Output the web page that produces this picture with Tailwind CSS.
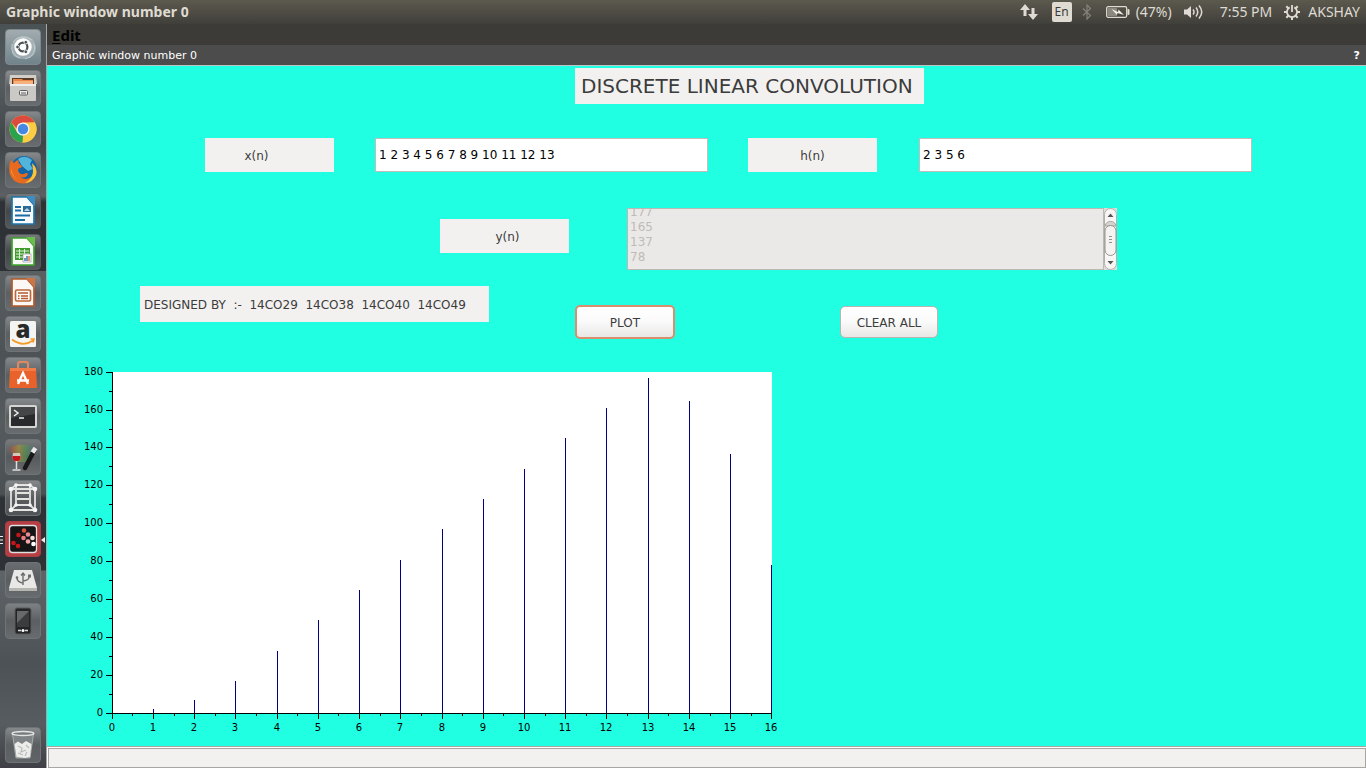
<!DOCTYPE html>
<html lang="en">
<head>
<meta charset="utf-8">
<title>Graphic window number 0</title>
<script src="https://cdn.jsdelivr.net/npm/@tailwindcss/browser@4"></script>
</head>
<body class="h-screen flex flex-col overflow-hidden bg-[#3c3b37] font-['DejaVu_Sans',sans-serif]">

<header class="h-6 shrink-0 flex items-center justify-between bg-linear-to-b from-[#5c594e] via-[#4e4c44] to-[#413f3a] px-1.5 font-['Noto_Sans',sans-serif] text-sm text-[#dfdbd2]">
  <h1 class="font-bold">Graphic window number 0</h1>
  <div class="flex items-center">
    <svg class="w-[18px] h-4 mr-3.5" viewBox="0 0 18 16" fill="#dfdbd2"><path d="M5 0 10 6H6.500V12H3.500V6H0ZM13 16 8 10H11.500V4H14.500V10H18Z"/></svg>
    <button class="w-5 h-5 mr-2.5 rounded-[2px] bg-[#dfdbd2] text-[#3c3b37] text-xs leading-5 text-center">En</button>
    <svg class="w-2.5 h-4 mr-3.5" viewBox="0 0 10 16" fill="none" stroke="#85827a" stroke-width="1.2"><path d="M1 4.500 8.500 11.500 5 15V1L8.500 4.500 1 11.500"/></svg>
    <svg class="w-6 h-3 mr-1.5" viewBox="0 0 24 12"><rect x=".7" y=".7" width="20" height="10.600" rx="1.500" fill="none" stroke="#dfdbd2" stroke-width="1.300"/><rect x="21.500" y="3" width="2" height="6" rx="1" fill="#dfdbd2"/><rect x="2" y="2" width="9" height="8" fill="#8b887f"/><path d="M5.500 3 12 6 12.500 3.500 18 9 11.500 7 11 9Z" fill="#f1eee6"/></svg>
    <span class="mr-3">(47%)</span>
    <svg class="w-5 h-4 mr-4" viewBox="0 0 20 16"><path d="M0 5.500H3L7 2V14L3 10.500H0Z" fill="#dfdbd2"/><path d="M9 5.500Q11 8 9 10.500M12 3.500Q15.500 8 12 12.500M15 1.500Q20.500 8 15 14.500" fill="none" stroke="#dfdbd2" stroke-width="1.500"/></svg>
    <span class="mr-3">7:55 PM</span>
    <svg class="w-4 h-4 mr-2" viewBox="0 0 16 16" fill="none" stroke="#dfdbd2"><path d="M5.700 3.400A5.100 5.100 0 1 0 10.300 3.400" stroke-width="1.800"/><path d="M8 1V8" stroke-width="1.800"/><path d="M0 8H3M13 8H16M2.300 2.300 4.500 4.500M13.700 2.300 11.500 4.500M2.300 13.700 4.500 11.500M13.700 13.700 11.500 11.500M8 13V16" stroke-width="2"/></svg>
    <span>AKSHAY</span>
  </div>
</header>

<div class="flex-1 min-h-0 flex">
  <nav class="w-[47px] shrink-0 flex flex-col gap-[5px] pt-[5px] pb-[5px] pl-[5px] border-r border-[#a5a5a5] bg-[linear-gradient(180deg,#4b5256_0px,#555b5e_60px,#3f4548_120px,#5b6163_172px,#2e3236_178px,#2e3236_247px,#5a6062_247px,#4c5255_330px,#555b5e_400px,#4b5153_470px,#2e3236_474px,#2e3236_546px,#5e6467_547px,#4c5255_640px,#565c5f_700px,#403f47_744px)]">
    <a href="#dash" aria-label="Dash" class="size-9 rounded-sm border border-[#7d898e] bg-linear-to-b from-[#a2acb0] to-[#71838b]"><svg viewBox="1 1 34 34"><path d="M7 24Q5 9 18 7Q29 6 31 18Q31 29 20 30Q9 30 7 24" fill="#b4c0c4" opacity=".6"/><path d="M8 13Q15 4 27 11M29 15Q32 27 20 30M15 29Q5 26 7 15" fill="none" stroke="#d6dddf" opacity=".6"/><circle cx="18" cy="18" r="8.700" fill="#fff"/><circle cx="18" cy="18" r="4.400" fill="none" stroke="#4a5256" stroke-width="2.200"/><g fill="#4a5256" stroke="#fff" stroke-width=".8"><circle cx="12.500" cy="18" r="1.800"/><circle cx="20.800" cy="13.200" r="1.800"/><circle cx="20.800" cy="22.800" r="1.800"/></g></svg></a>
    <a href="#files" aria-label="Files" class="size-9 rounded-sm border border-[#6e7375] bg-linear-to-b from-[#8b8f91] via-[#5b5f61] to-[#686c6e]"><svg viewBox="1 1 34 34"><path d="M5 5H31L32 14H4Z" fill="#d1cdc7"/><path d="M7 8H29V15H7Z" fill="#5c3a26"/><path d="M8 9H17L18 10H28V15H8Z" fill="#e98545"/><path d="M9 11H28V15H9Z" fill="#f6b27e"/><rect x="5" y="14" width="26" height="17" rx="1" fill="#cbc9c6"/><path d="M5 14H31V16H5Z" fill="#eeedeb"/><rect x="14.500" y="20.500" width="8" height="4.500" rx="1" fill="#eee" stroke="#5a5a5a"/><path d="M16 23H21" stroke="#5a5a5a"/></svg></a>
    <a href="#chrome" aria-label="Chrome" class="size-9 rounded-sm border border-[#6e7375] bg-linear-to-b from-[#85898b] via-[#5b5f61] to-[#686c6e]"><svg viewBox="1 1 34 34"><circle cx="18" cy="18" r="13.500" fill="#fbc93f"/><path d="M6.300 11.300A13.500 13.500 0 0 1 29.700 11.300L18 11.500 12 18Z" fill="#dd4b3e"/><path d="M6.300 11.300 12.200 21.400 18 24.700 17.500 31.500A13.500 13.500 0 0 1 6.300 11.300" fill="#2ba24c"/><path d="M17.500 31.500 23.800 21.400 24 13 29.900 11.500A13.500 13.500 0 0 1 17.500 31.500" fill="#fbcd45"/><circle cx="18" cy="18" r="6.600" fill="#eef4fb"/><circle cx="18" cy="18" r="5.200" fill="#4787e4"/></svg></a>
    <a href="#firefox" aria-label="Firefox" class="size-9 rounded-sm border border-[#6e7375] bg-linear-to-b from-[#85898b] via-[#5b5f61] to-[#686c6e]"><svg viewBox="1 1 34 34"><circle cx="19" cy="17" r="13" fill="#1565a5"/><path d="M13 7Q20 2 27 8L25 12 28 17 23 19 17 14Z" fill="#51b4db"/><path d="M6 8 9 11Q11 8 14 8Q12 11 16 13L17 15 13 17Q13 23 19 22Q22 20 23 22Q21 27 15 25Q22 30 28 23Q30 18 28 12Q33 17 31 23Q27 32 18 31.500Q7 31 4.500 21Q3.500 13 6 8Z" fill="#e86a20"/><path d="M27 11Q33 17 31 23Q28 30 20 31Q29 26 28 17Z" fill="#f9c33a"/><path d="M7 12Q5 22 12 27Q8 25 6 20Z" fill="#f79b2e"/></svg></a>
    <a href="#writer" aria-label="Writer" class="size-9 rounded-sm border border-[#54595c] bg-linear-to-b from-[#76797b] via-[#43474a] to-[#55595c]"><svg viewBox="1 1 34 34"><path d="M7 4H22L29 12V31H7Z" fill="#f8fafc" stroke="#1d76ad" stroke-width="1.700"/><path d="M21 3H30V13Z" fill="#3c8dc2"/><path d="M10 14H16M10 17.500H16M10 22.500H25M10 27H20" stroke="#1b6ca3" stroke-width="2"/><rect x="18" y="13" width="8" height="6" fill="#2a6a99"/><path d="M19 18 22 15 25 18Z" fill="#b7d6e8"/></svg></a>
    <a href="#calc" aria-label="Calc" class="size-9 rounded-sm border border-[#54595c] bg-linear-to-b from-[#76797b] via-[#43474a] to-[#55595c]"><svg viewBox="1 1 34 34"><path d="M7 4H22L29 12V31H7Z" fill="#f9fcf7" stroke="#3ba429" stroke-width="1.700"/><path d="M21 3H30V13Z" fill="#69bd4b"/><rect x="10" y="14" width="15" height="12" fill="#3f9c2c"/><path d="M11 17H24M11 20H24M11 23H24M14.500 15V25M19.500 15V25" stroke="#e0f1d9" stroke-width="1"/><rect x="18" y="20" width="8" height="8" fill="#fff" stroke="#999" stroke-width=".7"/><path d="M20 27V24M22 27V22" stroke="#4476a8" stroke-width="1.500"/><path d="M24 27V22" stroke="#dd7641" stroke-width="1.500"/></svg></a>
    <a href="#impress" aria-label="Impress" class="size-9 rounded-sm border border-[#6e7375] bg-linear-to-b from-[#85898b] via-[#5b5f61] to-[#686c6e]"><svg viewBox="1 1 34 34"><path d="M7 4H22L29 12V31H7Z" fill="#fbf8f5" stroke="#b45a28" stroke-width="1.700"/><path d="M21 3H30V13Z" fill="#cc7648"/><rect x="10.500" y="15" width="15" height="11" rx="1.500" fill="#fff" stroke="#bd6737" stroke-width="1.700"/><path d="M13 18H23M16 21H23M16 23.500H23M13 21H14.500M13 23.500H14.500" stroke="#b45a28" stroke-width="1.500"/></svg></a>
    <a href="#amazon" aria-label="Amazon" class="size-9 rounded-sm border border-[#6e7375] bg-linear-to-b from-[#85898b] via-[#5b5f61] to-[#686c6e]"><svg viewBox="1 1 34 34"><rect x="5" y="5" width="26" height="26" rx="1.500" fill="#f4f4f3"/><text x="18" y="22" text-anchor="middle" font-family="Open Sans" font-weight="800" font-size="24" fill="#292929">a</text><path d="M7 23.500Q18 31.500 28 24.500M25.500 23 29 23 28 26.500" fill="none" stroke="#f39b26" stroke-width="1.700"/></svg></a>
    <a href="#software" aria-label="Software" class="size-9 rounded-sm border border-[#6e7375] bg-linear-to-b from-[#85898b] via-[#5b5f61] to-[#686c6e]"><svg viewBox="1 1 34 34"><path d="M13 13V7Q13 5 15 5H21Q23 5 23 7V13" fill="none" stroke="#e28861" stroke-width="2"/><path d="M5 11H31L32 31H4Z" fill="#e9622c"/><path d="M5 11H31V14H5Z" fill="#f17c47"/><path d="M13 27 18 16 23 27M12 23.500H24" fill="none" stroke="#fff" stroke-width="2.300"/></svg></a>
    <a href="#terminal" aria-label="Terminal" class="size-9 rounded-sm border border-[#6e7375] bg-linear-to-b from-[#85898b] via-[#5b5f61] to-[#686c6e]"><svg viewBox="1 1 34 34"><rect x="5" y="8" width="26" height="21" rx="1" fill="#292a2b" stroke="#d5d5d3" stroke-width="2"/><path d="M6 9H30V16L6 20Z" fill="#454647"/><path d="M9 12 13 15 9 18M14 20H19" fill="none" stroke="#eee" stroke-width="1.500"/></svg></a>
    <a href="#wine" aria-label="Wine" class="size-9 rounded-sm border border-[#6e7375] bg-linear-to-b from-[#77797a] via-[#565a5c] to-[#686c6e]"><svg viewBox="1 1 34 34"><defs><linearGradient id="spectrum"><stop stop-color="#b53b3b"/><stop offset=".35" stop-color="#b69a2b"/><stop offset=".65" stop-color="#4b9c51"/><stop offset="1" stop-color="#5b5399"/></linearGradient></defs><path d="M4 9Q16 2 31 9L21 23 12 23Z" fill="url(#spectrum)" opacity=".55"/><path d="M8 14H15Q17 22 11.500 23Q6 22 8 14Z" fill="#e9d9d8" opacity=".8"/><path d="M7.500 17H15.500Q16 22 11.500 22.500Q7 22 7.500 17Z" fill="#c3161d"/><path d="M11.500 22V30M7.500 31H15.500" stroke="#dedede" stroke-width="1.500"/><path d="M20 29 29.500 11" stroke="#181818" stroke-width="4.500" stroke-linecap="round"/><path d="M27.500 13.500 30.500 9" stroke="#e9e9e9" stroke-width="4.500"/></svg></a>
    <a href="#cube" aria-label="Lattice" class="size-9 rounded-sm border border-[#6e7375] bg-linear-to-b from-[#85898b] via-[#595d5f] to-[#505457]"><svg viewBox="1 1 34 34" fill="none" stroke="#e4e4e2" stroke-width="1.800"><path d="M6 9H30V30H6ZM11 5H25M6 9 11 5M30 9 25 5M11 5V25H25V5M6 30 11 25M30 30 25 25"/><path d="M12 13H24M12 19H24" stroke-width="2"/><g fill="#f6f6f5" stroke="none"><circle cx="6" cy="9" r="2.300"/><circle cx="30" cy="9" r="2.300"/><circle cx="6" cy="30" r="2.300"/><circle cx="30" cy="30" r="2.300"/><circle cx="11" cy="5" r="1.800"/><circle cx="25" cy="5" r="1.800"/><circle cx="11" cy="25" r="1.800"/><circle cx="25" cy="25" r="1.800"/></g></svg></a>
    <a href="#scilab" aria-label="Scilab" class="relative size-9 rounded-sm border border-[#a93e42] bg-[#b63f45]"><svg viewBox="1 1 34 34"><rect x="4.500" y="4.500" width="27" height="27" rx="3" fill="#151515" stroke="#dfdfdf" stroke-width="1.300"/><g fill="#c6161c"><circle cx="8.500" cy="22" r="2.300"/><circle cx="13" cy="25" r="2.300"/><circle cx="13.500" cy="14" r="2.300"/></g><circle cx="19" cy="9.500" r="2.300" fill="#d9523f"/><circle cx="18.500" cy="17" r="2.300" fill="#ec7c80"/><circle cx="23" cy="13.500" r="2.300" fill="#e88b90"/><circle cx="23" cy="20.500" r="2.300" fill="#f3aaae"/><circle cx="27.500" cy="17" r="2.300" fill="#f9dadb"/><circle cx="28.500" cy="23" r="2.300" fill="#fff"/></svg>
      <svg class="absolute -left-1.5 top-3 w-[3px] h-3" viewBox="0 0 3 12"><path d="M0 2.500H3M0 6H3M0 9.500H3" stroke="#eee" stroke-width="1.200"/></svg>
      <svg class="absolute -right-[5px] top-3.5 w-1 h-2" viewBox="0 0 4 8"><path d="M4 1V7L0 4Z" fill="#eee"/></svg></a>
    <a href="#usb" aria-label="USB drive" class="size-9 rounded-sm border border-[#6e7375] bg-linear-to-b from-[#696d6f] via-[#595d5f] to-[#686c6e]"><svg viewBox="1 1 34 34"><path d="M9 8H27L32 26V29H4V26Z" fill="#e8e8e6"/><path d="M4 26H32V29H4Z" fill="#b5b5b2"/><path d="M18 23V12M16 13.500 18 11 20 13.500M18 21Q12 20 12 16M18 19Q25 18 24 14" fill="none" stroke="#6d6d6d" stroke-width="1.400"/><circle cx="12" cy="15.500" r="1.300" fill="#6d6d6d"/><rect x="23" y="12.500" width="3" height="3" fill="#6d6d6d"/></svg></a>
    <a href="#phone" aria-label="Phone" class="size-9 rounded-sm border border-[#6e7375] bg-linear-to-b from-[#7d8183] via-[#5b5f61] to-[#686c6e]"><svg viewBox="1 1 34 34"><rect x="10" y="5" width="16" height="26" rx="2" fill="#242526" stroke="#5a5b5c"/><rect x="12" y="8" width="12" height="16" fill="#3b3c3e"/><path d="M12 8H24L12 20Z" fill="#67696b"/><path d="M13 27.500H16M20 27.500H23" stroke="#ddd" stroke-width="1.300"/><circle cx="18" cy="27.500" r="1.500" fill="#fff"/></svg></a>
    <a href="#trash" aria-label="Trash" class="mt-auto size-9 rounded-sm border border-[#6e7375] bg-linear-to-b from-[#85898b] via-[#5b5f61] to-[#606466]"><svg viewBox="1 1 34 34"><path d="M7.500 7 11 31H25L28.500 7Z" fill="#7f8586" stroke="#b5b9ba" stroke-width=".8"/><ellipse cx="18" cy="6.500" rx="11" ry="2" fill="#767b7c" stroke="#e3e5e5" stroke-width="1.300"/><path d="M9.500 17 13 14.500 17 17 21 14 26.500 17 25 30 20 31 11.500 30Z" fill="#ecedeb"/><path d="M13 19 17 21 16 25 21 23M21 18 24 21M13 26 18 28M22 25 20 29" fill="none" stroke="#b9bcba" stroke-width="1.200"/></svg></a>
  </nav>

  <div class="flex-1 min-w-0 flex flex-col">
    <div class="h-[21px] shrink-0 flex items-center pl-[5px] bg-[#3c3b37] font-['Noto_Sans',sans-serif] font-bold text-[15px] text-black"><button class="leading-5"><span class="underline underline-offset-2">E</span>dit</button></div>
    <div class="h-5 shrink-0 flex items-center justify-between pl-[5px] pr-1.5 bg-[#4c4c4c] text-[11px] text-white"><span class="pt-0.5">Graphic window number 0</span><button aria-label="Help" class="pt-0.5 font-bold">?</button></div>

    <main class="flex-1 min-h-0 bg-[#21ffe3] border-t border-[#b5c9c4] text-xs text-[#3c3c3c]">
      <div class="grid grid-cols-[528fr_349fr_442fr] pt-0.5">
        <h2 class="col-start-2 h-9 bg-[#f2f1f0] text-xl leading-9 pl-1.5 whitespace-nowrap">DISCRETE LINEAR CONVOLUTION</h2>
      </div>
      <div class="grid grid-cols-[158fr_129fr_41fr_333fr_40fr_129fr_42fr_333fr_114fr] mt-[34px]">
        <label for="xn" class="col-start-2 h-[34px] bg-[#f2f1f0] leading-9 text-center pr-[26px]">x(n)</label>
        <input id="xn" value="1 2 3 4 5 6 7 8 9 10 11 12 13" class="col-start-4 min-w-0 h-[34px] bg-white border border-[#c2bdb8] pl-[3px] text-black">
        <label for="hn" class="col-start-6 h-[34px] bg-[#f2f1f0] leading-9 text-center">h(n)</label>
        <input id="hn" value="2 3 5 6" class="col-start-8 min-w-0 h-[34px] bg-white border border-[#c2bdb8] pl-[3px] text-black">
      </div>
      <div class="grid grid-cols-[393fr_129fr_58fr_490fr_249fr] mt-9">
        <label for="yn" class="col-start-2 mt-[11px] h-[34px] bg-[#f2f1f0] leading-9 text-center pl-1.5">y(n)</label>
        <div class="col-start-4 h-[62px] flex">
          <textarea id="yn" readonly class="flex-1 min-w-0 resize-none overflow-hidden bg-[#ebe9e8] border border-[#bcb8b4] px-0.5 pb-1 leading-[15px] text-[#c0bbb6]">145
161
177
165
137
78</textarea>
          <svg class="w-[13px] h-full bg-[#dedbd8]" viewBox="0 0 13 62"><rect x=".5" y=".5" width="12" height="61" rx="6" fill="#f7f6f5" stroke="#b3aeaa"/><path d="M1 18Q2 13.500 6.500 13.500Q11 13.500 12 18Z" fill="#d7d3cf" stroke="#aaa5a0"/><rect x="1" y="17.500" width="11" height="30" rx="5.500" fill="#f4f3f2" stroke="#989490"/><path d="M5 28.500H8M5 31.500H8M5 34.500H8" stroke="#94908c"/><path d="M3.500 9H9.500L6.500 5.500ZM3.500 53H9.500L6.500 56.500Z" fill="#555"/></svg>
        </div>
      </div>
      <div class="grid grid-cols-[93fr_349fr_86fr_100fr_165fr_98fr_428fr] mt-4">
        <p class="col-start-2 h-9 bg-[#f2f1f0] pl-1 leading-[38px] whitespace-pre overflow-hidden">DESIGNED BY  :-  14CO29  14CO38  14CO40  14CO49</p>
        <button class="col-start-4 mt-[19px] h-[34px] pt-0.5 rounded-[5px] border-2 border-[#d88f6b] bg-linear-to-b from-white via-[#fafafa] to-[#e8e7e6]">PLOT</button>
        <button class="col-start-6 mt-5 h-8 pt-0.5 rounded-[5px] border border-[#b9b5b1] bg-linear-to-b from-white via-[#fafafa] to-[#e8e7e6]">CLEAR ALL</button>
      </div>
      <svg id="chart" class="mt-[22px] ml-6 w-[740px] max-w-full h-auto" viewBox="71 361 740 380" shape-rendering="crispEdges" font-size="10" fill="#000" role="img" aria-label="Stem plot of y(n)">
        <rect x="112" y="372" width="660" height="341" fill="#fff"/>
      </svg>
    </main>

    <footer class="h-[22px] shrink-0 border-t border-[#a9a5a2] bg-white pt-px pl-px"><div class="h-5 bg-[#f2f1f0] border border-[#a9a5a2]"></div></footer>
  </div>
</div>

<script>
const chart = document.getElementById('chart');
function add(tag, attrs, text) {
  const el = document.createElementNS('http://www.w3.org/2000/svg', tag);
  for (const k in attrs) el.setAttribute(k, attrs[k]);
  if (text !== undefined) el.textContent = text;
  chart.appendChild(el);
}
const y = [2, 7, 17, 33, 49, 65, 81, 97, 113, 129, 145, 161, 177, 165, 137, 78];
const px = v => Math.round(111.7 + v * 41.23);
const stemTop = v => Math.round(713.1 - v * 341 / 180);
const tickY = v => Math.floor(713.2 - v * 341 / 180);
y.forEach((v, i) => add('rect', {x: px(i + 1), y: stemTop(v), width: 1, height: 713 - stemTop(v), fill: '#000080'}));
add('rect', {x: 112, y: 372, width: 1, height: 342});
add('rect', {x: 112, y: 713, width: 660, height: 1});
for (let i = 0; i <= 16; i++) {
  add('rect', {x: px(i), y: 713, width: 1, height: 6});
  if (i < 16) add('rect', {x: px(i + 0.5), y: 713, width: 1, height: 3});
  add('text', {x: px(i), y: 731, 'text-anchor': 'middle'}, i);
}
for (let v = 0; v <= 180; v += 20) {
  add('rect', {x: 106, y: tickY(v), width: 6, height: 1});
  if (v < 180) add('rect', {x: 109, y: tickY(v + 10), width: 3, height: 1});
  add('text', {x: 103, y: tickY(v) + 3, 'text-anchor': 'end'}, v);
}
document.getElementById('yn').scrollTop = 100;
</script>
</body>
</html>
